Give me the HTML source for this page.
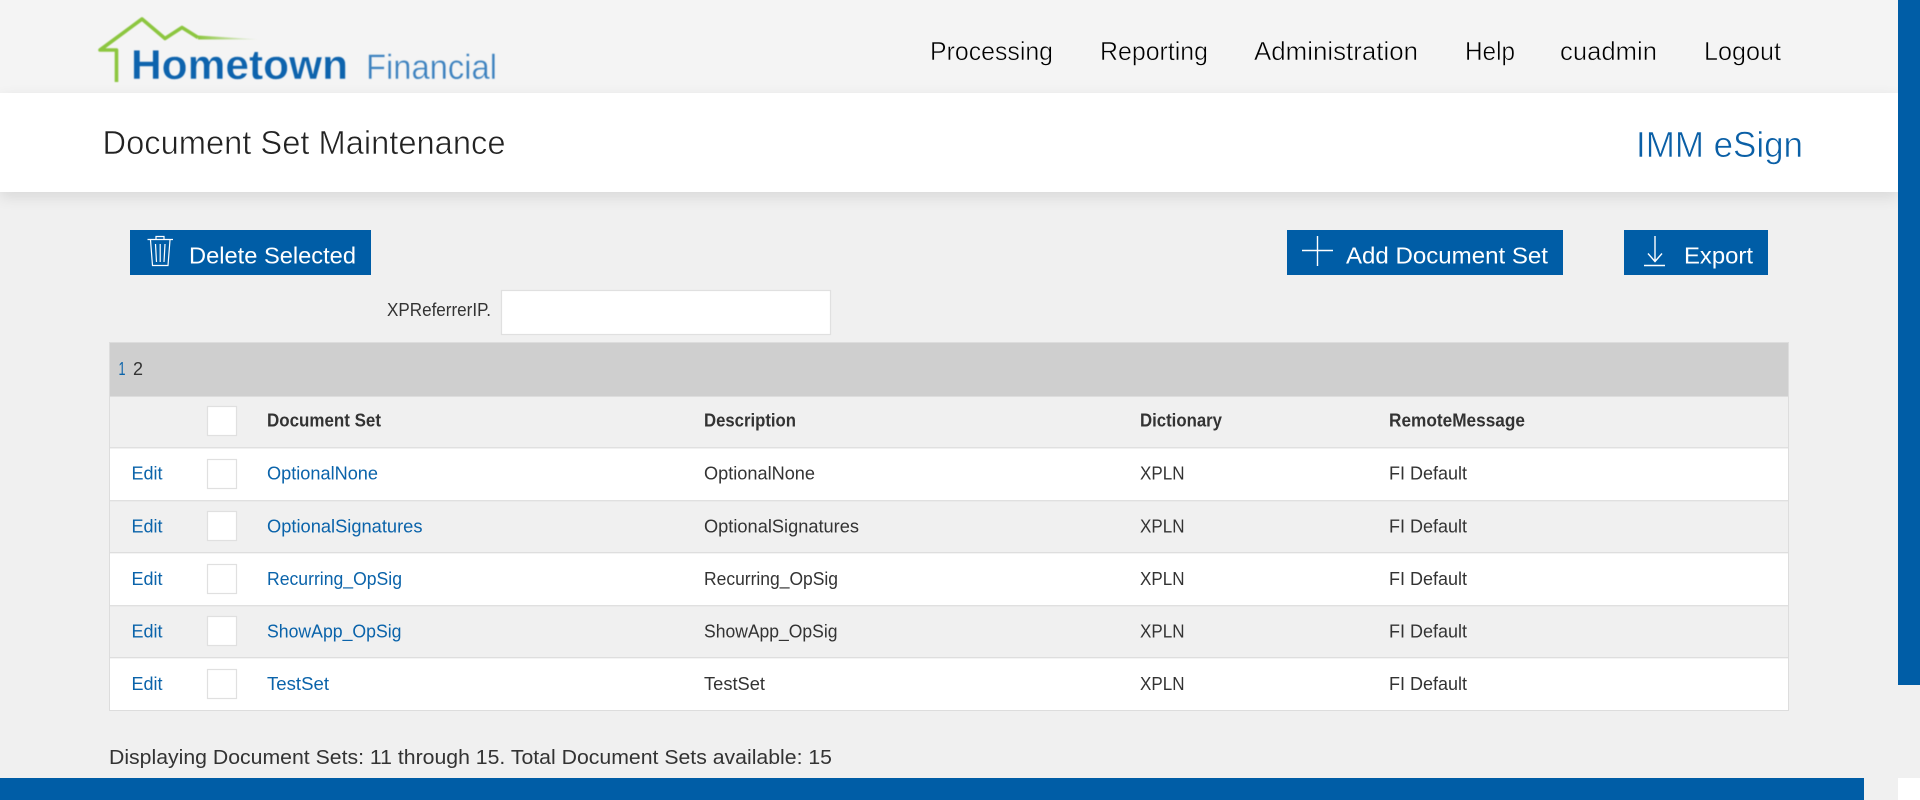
<!DOCTYPE html>
<html lang="en">
<head>
<meta charset="utf-8">
<title>Document Set Maintenance</title>
<style>
html,body{margin:0;padding:0;width:1920px;height:800px;overflow:hidden;background:#f0f0f0}
#top{position:absolute;left:0;top:0;width:1898px;height:93px;background:#f4f4f4}
#band{position:absolute;left:0;top:93px;width:1898px;height:99px;background:#fff;box-shadow:0 5px 14px rgba(0,0,0,.1)}
svg{position:absolute;left:0;top:0;display:block}
text{font-family:"Liberation Sans",Arial,sans-serif;font-size:18px;fill:#333;white-space:pre}
.b{font-weight:700}
.l{fill:#0a63aa}
.nav{font-size:26px;fill:#000;stroke:#f4f4f4;stroke-width:.5px}
.btn{font-size:23px;fill:#fff}
.cb{fill:#fff;stroke:#e0e0e0;stroke-width:1.2}
.ic{fill:none;stroke:#fff}
</style>
</head>
<body>
<div id="top"></div>
<div id="band"></div>
<svg width="1920" height="800" viewBox="0 0 1920 800" xmlns="http://www.w3.org/2000/svg">
  <!-- side / footer -->
  <rect x="1898" y="0" width="22" height="685" fill="#005da6"/>
  <rect x="0" y="778" width="1864" height="22" fill="#005da6"/>
  <rect x="1898" y="778" width="22" height="22" fill="#fff"/>

  <!-- logo -->
  <g style="filter:blur(.45px)">
    <defs>
      <linearGradient id="fade" x1="198" y1="0" x2="260" y2="0" gradientUnits="userSpaceOnUse">
        <stop offset="0" stop-color="#8cc63f"/><stop offset="1" stop-color="#8cc63f" stop-opacity="0"/>
      </linearGradient>
    </defs>
    <path d="M116.5 82V50H100L142 19L165 38.500L182 27.500L198 37.500" fill="none" stroke="#8cc63f" stroke-width="3.600" stroke-linejoin="round"/>
    <path d="M198 35.500L260 39.500L198 39.500Z" fill="url(#fade)"/>
    <text x="131" y="79" textLength="217" lengthAdjust="spacingAndGlyphs" style="font-size:42px;font-weight:700;fill:#0d63ad;stroke:#f4f4f4;stroke-width:.4px">Hometown</text>
    <text x="366" y="79" textLength="131" lengthAdjust="spacingAndGlyphs" style="font-size:35px;fill:#3d82bf;stroke:#f4f4f4;stroke-width:.4px">Financial</text>
  </g>

  <!-- nav -->
  <text class="nav" x="930" y="60" textLength="123" lengthAdjust="spacingAndGlyphs">Processing</text>
  <text class="nav" x="1100" y="60" textLength="108" lengthAdjust="spacingAndGlyphs">Reporting</text>
  <text class="nav" x="1254" y="60" textLength="164" lengthAdjust="spacingAndGlyphs">Administration</text>
  <text class="nav" x="1465" y="60" textLength="50" lengthAdjust="spacingAndGlyphs">Help</text>
  <text class="nav" x="1560" y="60" textLength="97" lengthAdjust="spacingAndGlyphs">cuadmin</text>
  <text class="nav" x="1704" y="60" textLength="77" lengthAdjust="spacingAndGlyphs">Logout</text>

  <!-- title band -->
  <text x="102.500" y="154" textLength="403" lengthAdjust="spacingAndGlyphs" style="font-size:33px;fill:#222;stroke:#fff;stroke-width:.6px">Document Set Maintenance</text>
  <text x="1636" y="157" textLength="167" lengthAdjust="spacingAndGlyphs" style="font-size:36px;fill:#0a5fa6;stroke:#fff;stroke-width:.6px">IMM eSign</text>

  <!-- buttons -->
  <rect x="130" y="230" width="241" height="45" fill="#005da6"/>
  <rect x="1287" y="230" width="276" height="45" fill="#005da6"/>
  <rect x="1624" y="230" width="144" height="45" fill="#005da6"/>

  <g class="ic" stroke-width="1.2">
    <path d="M147.500 239.500H173"/>
    <path d="M156 239V236.500H164V239"/>
    <path d="M150.500 240L152.500 265.500H168L170 240"/>
    <path d="M155.500 244L156.500 262M160.200 244V262M165 244L164 262"/>
  </g>
  <g class="ic" stroke-width="1.4">
    <path d="M1302 250.500H1333M1317.500 236V266"/>
    <path d="M1655 236V262M1648 253.500L1655 261.500L1662 253.500"/>
    <path d="M1644 265.500H1665"/>
  </g>

  <text class="btn" x="189" y="263.500" textLength="167" lengthAdjust="spacingAndGlyphs">Delete Selected</text>
  <text class="btn" x="1346" y="263.500" textLength="202" lengthAdjust="spacingAndGlyphs">Add Document Set</text>
  <text class="btn" x="1684" y="263.500" textLength="69" lengthAdjust="spacingAndGlyphs">Export</text>

  <!-- filter -->
  <text x="387" y="316" textLength="104" lengthAdjust="spacingAndGlyphs">XPReferrerIP.</text>
  <rect x="501.500" y="290.500" width="329" height="44" class="cb"/>

  <!-- table -->
  <rect x="109" y="342" width="1680" height="369" fill="#ddd"/>
  <rect x="110" y="343" width="1678" height="53" fill="#cfcfcf"/>
  <rect x="110" y="397" width="1678" height="50.200" fill="#f0f0f0"/>
  <rect x="110" y="448.400" width="1678" height="51.700" fill="#fff"/>
  <rect x="110" y="501.300" width="1678" height="50.800" fill="#f0f0f0"/>
  <rect x="110" y="553.300" width="1678" height="51.800" fill="#fff"/>
  <rect x="110" y="606.300" width="1678" height="50.800" fill="#f0f0f0"/>
  <rect x="110" y="658.300" width="1678" height="51.700" fill="#fff"/>

  <text class="l" x="118.500" y="375" textLength="7" lengthAdjust="spacingAndGlyphs">1</text>
  <text x="133" y="375" textLength="10" lengthAdjust="spacingAndGlyphs">2</text>

  <!-- header -->
  <rect x="207.500" y="406.500" width="29" height="29" class="cb"/>
  <text class="b" x="267" y="426.500" textLength="114" lengthAdjust="spacingAndGlyphs">Document Set</text>
  <text class="b" x="704" y="426.500" textLength="92" lengthAdjust="spacingAndGlyphs">Description</text>
  <text class="b" x="1140" y="426.500" textLength="82" lengthAdjust="spacingAndGlyphs">Dictionary</text>
  <text class="b" x="1389" y="426.500" textLength="136" lengthAdjust="spacingAndGlyphs">RemoteMessage</text>

  <!-- row 1 -->
  <text class="l" x="131.500" y="479.500" textLength="31" lengthAdjust="spacingAndGlyphs">Edit</text>
  <rect x="207.500" y="459.500" width="29" height="29" class="cb"/>
  <text class="l" x="267" y="479.500" textLength="111" lengthAdjust="spacingAndGlyphs">OptionalNone</text>
  <text x="704" y="479.500" textLength="111" lengthAdjust="spacingAndGlyphs">OptionalNone</text>
  <text x="1140" y="479.500" textLength="44.500" lengthAdjust="spacingAndGlyphs">XPLN</text>
  <text x="1389" y="479.500" textLength="78" lengthAdjust="spacingAndGlyphs">FI Default</text>

  <!-- row 2 -->
  <text class="l" x="131.500" y="532.500" textLength="31" lengthAdjust="spacingAndGlyphs">Edit</text>
  <rect x="207.500" y="511.500" width="29" height="29" class="cb"/>
  <text class="l" x="267" y="532.500" textLength="155.500" lengthAdjust="spacingAndGlyphs">OptionalSignatures</text>
  <text x="704" y="532.500" textLength="155" lengthAdjust="spacingAndGlyphs">OptionalSignatures</text>
  <text x="1140" y="532.500" textLength="44.500" lengthAdjust="spacingAndGlyphs">XPLN</text>
  <text x="1389" y="532.500" textLength="78" lengthAdjust="spacingAndGlyphs">FI Default</text>

  <!-- row 3 -->
  <text class="l" x="131.500" y="585" textLength="31" lengthAdjust="spacingAndGlyphs">Edit</text>
  <rect x="207.500" y="564.500" width="29" height="29" class="cb"/>
  <text class="l" x="267" y="585" textLength="135" lengthAdjust="spacingAndGlyphs">Recurring_OpSig</text>
  <text x="704" y="585" textLength="134" lengthAdjust="spacingAndGlyphs">Recurring_OpSig</text>
  <text x="1140" y="585" textLength="44.500" lengthAdjust="spacingAndGlyphs">XPLN</text>
  <text x="1389" y="585" textLength="78" lengthAdjust="spacingAndGlyphs">FI Default</text>

  <!-- row 4 -->
  <text class="l" x="131.500" y="637.500" textLength="31" lengthAdjust="spacingAndGlyphs">Edit</text>
  <rect x="207.500" y="616.500" width="29" height="29" class="cb"/>
  <text class="l" x="267" y="637.500" textLength="134.500" lengthAdjust="spacingAndGlyphs">ShowApp_OpSig</text>
  <text x="704" y="637.500" textLength="133.500" lengthAdjust="spacingAndGlyphs">ShowApp_OpSig</text>
  <text x="1140" y="637.500" textLength="44.500" lengthAdjust="spacingAndGlyphs">XPLN</text>
  <text x="1389" y="637.500" textLength="78" lengthAdjust="spacingAndGlyphs">FI Default</text>

  <!-- row 5 -->
  <text class="l" x="131.500" y="690" textLength="31" lengthAdjust="spacingAndGlyphs">Edit</text>
  <rect x="207.500" y="669.500" width="29" height="29" class="cb"/>
  <text class="l" x="267" y="690" textLength="62" lengthAdjust="spacingAndGlyphs">TestSet</text>
  <text x="704" y="690" textLength="61" lengthAdjust="spacingAndGlyphs">TestSet</text>
  <text x="1140" y="690" textLength="44.500" lengthAdjust="spacingAndGlyphs">XPLN</text>
  <text x="1389" y="690" textLength="78" lengthAdjust="spacingAndGlyphs">FI Default</text>

  <!-- footer text -->
  <text x="109" y="764" textLength="723" lengthAdjust="spacingAndGlyphs" style="font-size:20px">Displaying Document Sets: 11 through 15. Total Document Sets available: 15</text>
</svg>
</body>
</html>
